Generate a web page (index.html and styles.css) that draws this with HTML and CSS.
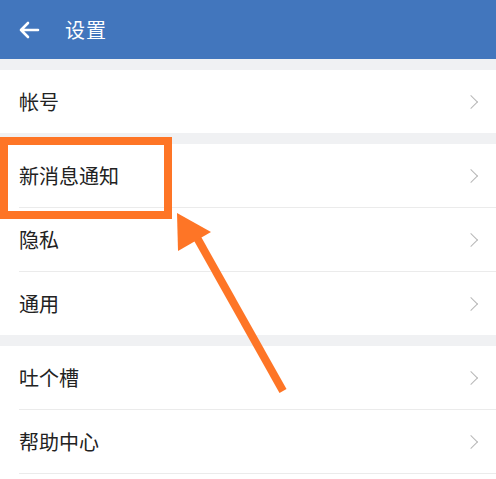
FILE: index.html
```html
<!DOCTYPE html>
<html lang="zh">

<head>
    <meta charset="UTF-8">
    <meta name="viewport" content="width=device-width, initial-scale=1.0">
    <title>设置</title>
    <link rel="stylesheet" href="styles.css">
</head>

<body>
    <div class="page">
        <div class="header">
            <svg class="back" width="22" height="18" viewBox="0 0 22 18">
                <path d="M20 9H3M10 2L3 9l7 7" fill="none" stroke="#fff" stroke-width="2.6" stroke-linecap="round" stroke-linejoin="round" />
            </svg>
            <div class="title">设置</div>
        </div>

        <div class="group">
            <div class="item">帐号</div>
        </div>

        <div class="group">
            <div class="item">新消息通知</div>
            <div class="item">隐私</div>
            <div class="item">通用</div>
        </div>

        <div class="group last">
            <div class="item">吐个槽</div>
            <div class="item">帮助中心</div>
        </div>

        <!-- 标注 -->
        <div class="mark"></div>
        <svg class="arrow" width="496" height="479" viewBox="0 0 496 479">
            <line x1="196" y1="236" x2="283" y2="391" stroke="#fe7526" stroke-width="8" stroke-linecap="butt" />
            <polygon points="177,213 211,232 178,251" fill="#fe7526" />
        </svg>
    </div>
</body>

</html>
```

FILE: styles.css
```css
* {
    padding: 0px;
    margin: 0px;
    box-sizing: border-box;
}

html,
body {
    width: 100%;
    height: 100%;
    overflow: hidden;
}

body {
    background-color: #f0f1f3;
    font-family: "Noto Sans CJK SC", "Noto Sans", sans-serif;
}

.page {
    position: relative;
    width: 100%;
    height: 100%;
    background-color: #fff;
}

.header {
    height: 59px;
    background-color: #4276bd;
    display: flex;
    align-items: center;
    padding-left: 18px;
}

.back {
    display: block;
}

.title {
    color: #fff;
    font-size: 20px;
    margin-left: 25px;
    letter-spacing: 1px;
}

.group {
    background-color: #fff;
    border-top: 11px solid #f0f1f3;
    padding-left: 19px;
}

.group .item {
    height: 64px;
    border-bottom: 1px solid #ebebeb;
    display: flex;
    align-items: center;
    font-size: 20px;
    color: #222;
    position: relative;
}

.group .item:last-child {
    border-bottom: none;
    height: 63px;
}

.group.last .item:last-child {
    height: 64px;
    border-bottom: 1px solid #ebebeb;
}

.group .item::after {
    content: '';
    position: absolute;
    right: 20px;
    top: 50%;
    width: 9px;
    height: 9px;
    margin-top: -5px;
    border-top: 1.5px solid #b8b8b8;
    border-right: 1.5px solid #b8b8b8;
    transform: rotate(45deg);
}

.mark {
    position: absolute;
    left: 0;
    top: 137px;
    width: 172px;
    height: 82px;
    border: 8px solid #fe7526;
}

.arrow {
    position: absolute;
    left: 0;
    top: 0;
}
```
